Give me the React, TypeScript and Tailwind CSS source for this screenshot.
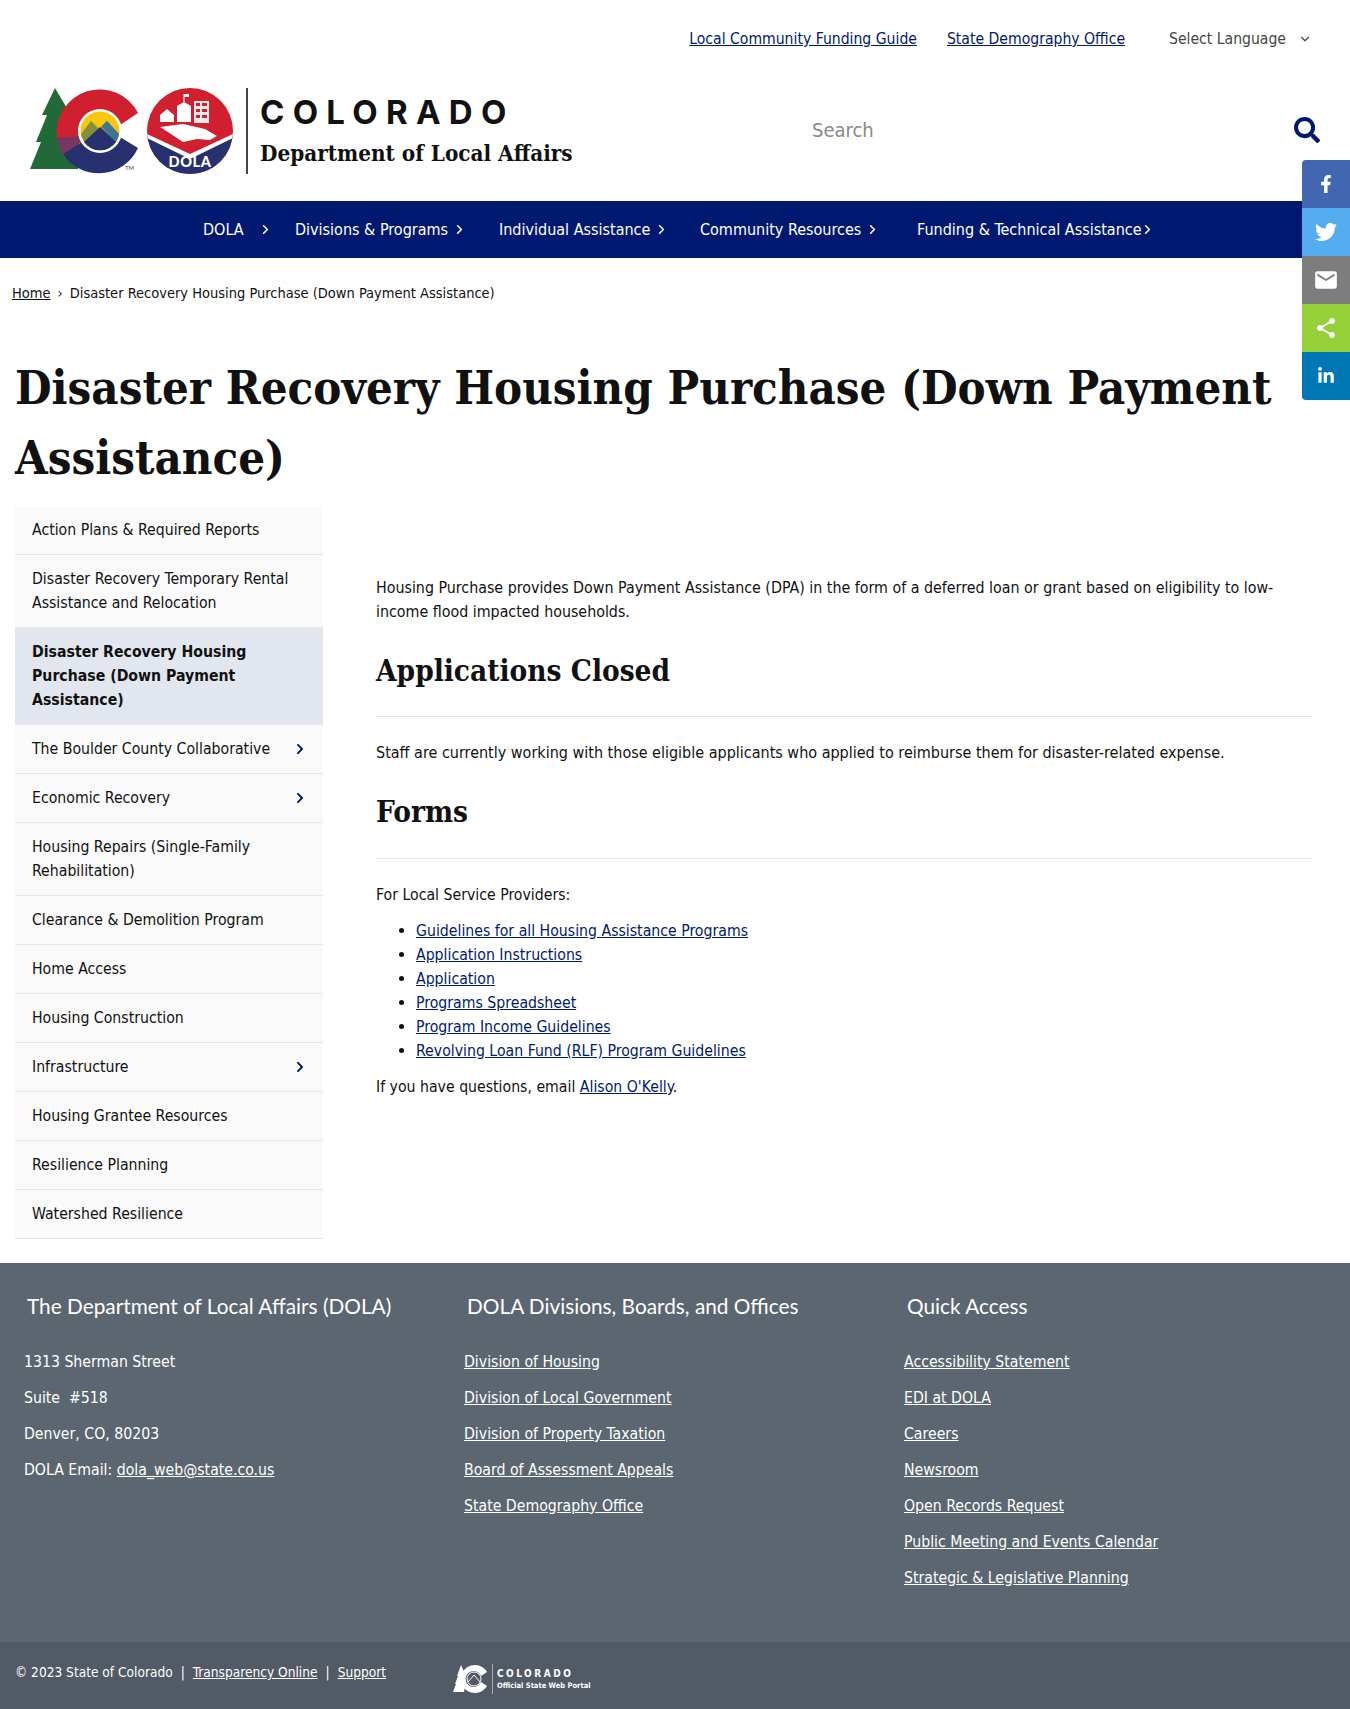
import React from 'react';
import { FaFacebookF, FaTwitter, FaLinkedinIn, FaSearch, FaChevronRight } from 'react-icons/fa';
import { MdEmail, MdShare } from 'react-icons/md';
import { ChevronDown, ChevronRight } from 'lucide-react';

const sideItems = [
  { label: 'Action Plans & Required Reports' },
  { label: 'Disaster Recovery Temporary Rental Assistance and Relocation' },
  { label: 'Disaster Recovery Housing Purchase (Down Payment Assistance)', active: true },
  { label: 'The Boulder County Collaborative', arrow: true },
  { label: 'Economic Recovery', arrow: true },
  { label: 'Housing Repairs (Single-Family Rehabilitation)' },
  { label: 'Clearance & Demolition Program' },
  { label: 'Home Access' },
  { label: 'Housing Construction' },
  { label: 'Infrastructure', arrow: true },
  { label: 'Housing Grantee Resources' },
  { label: 'Resilience Planning' },
  { label: 'Watershed Resilience' },
];

const navItems = [
  { label: 'DOLA', cls: 'w-[92px]', gap: 'ml-[14px]' },
  { label: 'Divisions & Programs', cls: 'w-[204px]', gap: 'ml-[4px]' },
  { label: 'Individual Assistance', cls: 'w-[201px]', gap: 'ml-[4px]' },
  { label: 'Community Resources', cls: 'w-[217px]', gap: 'ml-[4px]' },
  { label: 'Funding & Technical Assistance', cls: 'w-[260px]', gap: '-ml-[2px]' },
];

const docLinks = [
  'Guidelines for all Housing Assistance Programs',
  'Application Instructions',
  'Application',
  'Programs Spreadsheet',
  'Program Income Guidelines',
  'Revolving Loan Fund (RLF) Program Guidelines',
];

const footerDivisions = [
  'Division of Housing',
  'Division of Local Government',
  'Division of Property Taxation',
  'Board of Assessment Appeals',
  'State Demography Office',
];

const footerQuick = [
  'Accessibility Statement',
  'EDI at DOLA',
  'Careers',
  'Newsroom',
  'Open Records Request',
  'Public Meeting and Events Calendar',
  'Strategic & Legislative Planning',
];

const serif = "font-['DejaVu_Serif_Condensed',serif]";

const ColoradoLogo = () => (
  <svg width="112" height="87" viewBox="0 0 112 87" className="shrink-0">
    <path d="M25 0 L12 27 L17 27 L6 54 L11 54 L0 81 L48 81 L48 30 L38 22 Z" fill="#22693a" />
    <path d="M108 25 A43 43 0 0 0 27 50 L49 48 A21.5 21.5 0 0 1 90 37 Z" fill="#d0202f" />
    <path d="M33 66 L52 54 A21.5 21.5 0 0 0 90 49 L108 60 A43 43 0 0 1 33 66 Z" fill="#27316f" />
    <path d="M27 50 L49 48 L52 54 L33 66 A43 43 0 0 1 27 50 Z" fill="#7a3560" />
    <circle cx="70" cy="43" r="22" fill="#fff" />
    <circle cx="70" cy="43" r="19.5" fill="#f7c70f" />
    <path d="M51 46 L61 33 L69 41 L77 33 L89 46 A19.5 19.5 0 0 1 51 46 Z" fill="#848f36" />
    <path d="M72 38 L77 33 L89 46 A19.5 19.5 0 0 1 85 55 Z" fill="#3d7597" />
    <path d="M54 54 L70 39 L86 54 A19.5 19.5 0 0 1 54 54 Z" fill="#27316f" />
    <text x="95" y="82" fontFamily="Lato, sans-serif" fontSize="6" fill="#444">TM</text>
  </svg>
);

const DolaLogo = () => (
  <svg width="86" height="86" viewBox="0 0 86 86" className="shrink-0">
    <defs>
      <clipPath id="dola-circle">
        <circle cx="43" cy="43" r="43" />
      </clipPath>
    </defs>
    <g clipPath="url(#dola-circle)">
      <rect width="86" height="86" fill="#d0202f" />
      <path d="M0 48 L43 68 L86 48 L86 86 L0 86 Z" fill="#27316f" />
      <path d="M0 46 L43 66 L86 46 L86 50 L43 71 L0 50 Z" fill="#fff" />
    </g>
    <path d="M13 39 L36 36 L58 41 L70 48 L63 52 L50 51 L36 54 L24 46 Z" fill="#fff" />
    <path d="M13 27 L20 21 L27 27 L27 34 L13 34 Z" fill="#fff" />
    <path d="M30 18 L37 14 L44 18 L44 34 L30 34 Z" fill="#fff" />
    <rect x="36.5" y="6" width="1" height="8" fill="#fff" />
    <rect x="37" y="6" width="5" height="3" fill="#fff" />
    <path d="M47 13 H62 V35 H47 Z M49 15 V18 H53 V15 Z M55 15 V18 H60 V15 Z M49 21 V24 H53 V21 Z M55 21 V24 H60 V21 Z M49 27 V30 H53 V27 Z M55 27 V30 H60 V27 Z" fill="#fff" fillRule="evenodd" opacity="0.9" />
    <text x="43" y="79" textAnchor="middle" fontFamily="Lato, sans-serif" fontWeight="900" fontSize="14.5" letterSpacing="0.6" fill="#fff">DOLA</text>
  </svg>
);

const FooterLogo = () => (
  <svg width="36" height="30" viewBox="0 0 36 30" className="shrink-0">
    <path d="M8 1 L12 10 L10 10 L13 18 L11 28 L0 28 L3 20 L2 20 L5 12 L4 12 Z" fill="#fff" />
    <path d="M34 8 A14 14 0 1 0 34 22 L28 18 A8 8 0 1 1 28 12 Z" fill="#fff" />
    <circle cx="21" cy="15" r="7" fill="none" stroke="#fff" strokeWidth="1" />
    <path d="M15 18 L21 11 L27 18" fill="none" stroke="#fff" strokeWidth="1" />
  </svg>
);

const shareButtons = [
  { bg: 'bg-[#4267b2] rounded-tl-[4px]', icon: <FaFacebookF size={18} color="#fff" /> },
  { bg: 'bg-[#55acee]', icon: <FaTwitter size={22} color="#fff" /> },
  { bg: 'bg-[#7d7d7d]', icon: <MdEmail size={26} color="#fff" /> },
  { bg: 'bg-[#95d03a]', icon: <MdShare size={24} color="#fff" /> },
  { bg: 'bg-[#0077b5] rounded-bl-[4px]', icon: <FaLinkedinIn size={18} color="#fff" /> },
];

export default function App() {
  return (
    <div className="relative w-[1350px] h-[1709px] overflow-hidden bg-white text-[15.7px] leading-6 text-[#111] font-['DejaVu_Sans_Condensed',sans-serif]">
      {/* share rail */}
      <div className="absolute right-0 top-[160px] w-[48px] flex flex-col">
        {shareButtons.map((b, i) => (
          <div key={i} className={`h-[48px] flex items-center justify-center ${b.bg}`}>
            {b.icon}
          </div>
        ))}
      </div>

      <header className="h-[201px] flex flex-col">
        <div className="h-[77px] pt-px flex items-center justify-end pr-[38px] text-[15.6px]">
          <a className="underline text-[#001970]">Local Community Funding Guide</a>
          <a className="underline text-[#001970] ml-[30px]">State Demography Office</a>
          <div className="ml-[44px] flex items-center gap-[12px] text-[#444]">
            Select Language
            <ChevronDown size={14} />
          </div>
        </div>
        <div className="flex items-start pl-[30px]">
          <div className="flex items-stretch w-[580px] h-[86px] mt-[11px]">
            <ColoradoLogo />
            <div className="ml-[5px]"><DolaLogo /></div>
            <div className="w-[2px] bg-[#444] ml-[13px]" />
            <div className="ml-[12px] flex flex-col">
              <div className="text-[33px] leading-[40px] mt-[4px] font-bold tracking-[0.25em] text-[#111] font-['Inter',sans-serif]">COLORADO</div>
              <div className={`text-[22.3px] leading-[30px] mt-[6px] font-bold ${serif}`}>Department of Local Affairs</div>
            </div>
          </div>
          <div className="ml-[202px] mt-[34px] w-[508px] flex items-center justify-between">
            <span className="text-[20px] leading-[38px] text-[#8a8a8a]">Search</span>
            <FaSearch size={26} color="#001970" />
          </div>
        </div>
      </header>

      <nav className="h-[57px] bg-[#001970] text-white text-[16px] flex items-center pl-[203px]">
        {navItems.map((n) => (
          <div key={n.label} className={`flex items-center ${n.cls}`}>
            <span>{n.label}</span>
            {n.label === 'DOLA' ? <ChevronRight size={15} strokeWidth={2.5} className="ml-[14px]" /> : <ChevronRight size={15} strokeWidth={2.5} className={n.gap} />}
          </div>
        ))}
      </nav>

      <div className="h-[70px] pl-[12px] flex items-center text-[14.5px]">
        <a className="underline">Home</a>
        <span className="mx-[7px]">›</span>
        <span>Disaster Recovery Housing Purchase (Down Payment Assistance)</span>
      </div>

      <h1 className={`pl-[15px] pr-[60px] mt-[25px] text-[46.9px] leading-[70px] font-bold text-[#111] ${serif}`}>
        Disaster Recovery Housing Purchase (Down Payment Assistance)
      </h1>

      <div className="flex mt-[13px]">
        <aside className="w-[308px] ml-[15px] shrink-0">
          {sideItems.map((s) => (
            <div
              key={s.label}
              className={`flex items-center justify-between px-[17px] py-3 border-b border-[#e6e6e6] ${s.active ? 'bg-[#e2e6ee] font-bold' : 'bg-[#fafafa]'}`}
            >
              <span className={s.active ? 'max-w-[230px]' : 'max-w-[270px]'}>{s.label}</span>
              {s.arrow && <FaChevronRight size={12} color="#001970" />}
            </div>
          ))}
        </aside>

        <main className="ml-[53px] w-[936px] pt-[70px]">
          <p className="text-[15.85px]">Housing Purchase provides Down Payment Assistance (DPA) in the form of a deferred loan or grant based on eligibility to low-income flood impacted households.</p>
          <h2 className={`mt-[27px] text-[29.5px] leading-[40px] font-bold ${serif}`}>Applications Closed</h2>
          <hr className="mt-[25px] border-[#e5e5e5]" />
          <p className="mt-[24px] text-[16px]">Staff are currently working with those eligible applicants who applied to reimburse them for disaster-related expense.</p>
          <h2 className={`mt-[27px] text-[29.5px] leading-[40px] font-bold ${serif}`}>Forms</h2>
          <hr className="mt-[26px] border-[#e5e5e5]" />
          <p className="mt-[24px]">For Local Service Providers:</p>
          <ul className="mt-[12px] pl-[40px] list-disc">
            {docLinks.map((l) => (
              <li key={l}><a className="underline text-[#001970]">{l}</a></li>
            ))}
          </ul>
          <p className="mt-[12px]">If you have questions, email <a className="underline text-[#001970]">Alison O'Kelly</a>.</p>
        </main>
      </div>

      <footer className="absolute left-0 top-[1263px] w-full h-[446px] bg-[#5c6670] text-white">
        <div className="h-[379px] flex pl-[24px] pt-[29px]">
          <div className="w-[440px]">
            <h3 className="pl-[3px] text-[20.8px] leading-[28px] font-['Lato',sans-serif]">The Department of Local Affairs (DOLA)</h3>
            <div className="mt-[30px] flex flex-col gap-[12px]">
              <div>1313 Sherman Street</div>
              <div>Suite &nbsp;#518</div>
              <div>Denver, CO, 80203</div>
              <div>DOLA Email: <a className="underline">dola_web@state.co.us</a></div>
            </div>
          </div>
          <div className="w-[440px]">
            <h3 className="pl-[3px] text-[20.8px] leading-[28px] font-['Lato',sans-serif]">DOLA Divisions, Boards, and Offices</h3>
            <div className="mt-[30px] flex flex-col items-start gap-[12px]">
              {footerDivisions.map((l) => <a key={l} className="underline">{l}</a>)}
            </div>
          </div>
          <div className="w-[440px]">
            <h3 className="pl-[3px] text-[20.8px] leading-[28px] font-['Lato',sans-serif]">Quick Access</h3>
            <div className="mt-[30px] flex flex-col items-start gap-[12px]">
              {footerQuick.map((l) => <a key={l} className="underline">{l}</a>)}
            </div>
          </div>
        </div>
        <div className="h-[67px] bg-[#525a66] flex items-start pl-[15px] pt-[20px] text-[13.6px] leading-5">
          <span>© 2023 State of Colorado</span>
          <span className="mx-[8px]">|</span>
          <a className="underline">Transparency Online</a>
          <span className="mx-[8px]">|</span>
          <a className="underline">Support</a>
          <div className="ml-[67px] mt-[2px] flex items-center">
            <FooterLogo />
            <div className="w-px h-[30px] bg-[#aaa] ml-[3px]" />
            <div className="ml-[4px] flex flex-col">
              <span className="text-[10px] leading-[13px] font-bold tracking-[0.25em]">COLORADO</span>
              <span className="text-[7.5px] leading-[12px] font-bold">Official State Web Portal</span>
            </div>
          </div>
        </div>
      </footer>
    </div>
  );
}
